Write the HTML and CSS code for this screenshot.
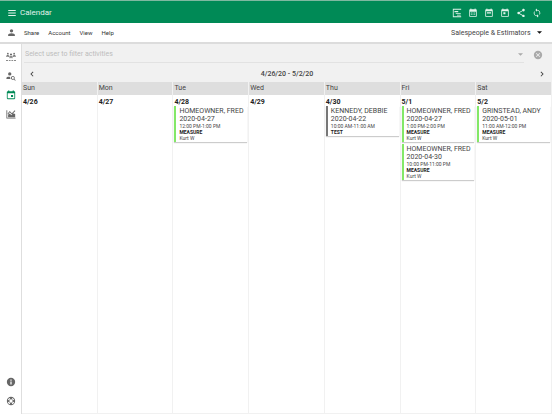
FILE: index.html
```html
<!DOCTYPE html>
<html lang="en">
<head>
<meta charset="utf-8">
<title>Calendar</title>
<link rel="stylesheet" href="styles.css">
</head>
<body>
<header class="topbar">
  <button class="icon-btn" aria-label="Menu"><svg viewBox="0 0 24 24"><path d="M3 5h18v2H3zM3 11h18v2H3zM3 17h18v2H3z"/></svg></button>
  <h1>Calendar</h1>
  <div class="actions">
    <button class="icon-btn" aria-label="Timeline"><svg viewBox="0 0 24 24"><path d="M2 2h2v18h18v2H2zM4 2h18v2H4zM6 7h9v3H6zM9 12h12v2H9zM12 16h9v2h-9z"/></svg></button>
    <button class="icon-btn" aria-label="Month"><svg viewBox="0 0 24 24"><path d="M19 3h-1V1h-2v2H8V1H6v2H5a2 2 0 0 0-2 2v14a2 2 0 0 0 2 2h14a2 2 0 0 0 2-2V5a2 2 0 0 0-2-2m0 16H5V9h14zM7 11h2v2H7zM11 11h2v2h-2zM15 11h2v2h-2zM7 15h2v2H7zM11 15h2v2h-2zM15 15h2v2h-2z"/></svg></button>
    <button class="icon-btn" aria-label="Week"><svg viewBox="0 0 24 24"><path d="M19 3h-1V1h-2v2H8V1H6v2H5a2 2 0 0 0-2 2v14a2 2 0 0 0 2 2h14a2 2 0 0 0 2-2V5a2 2 0 0 0-2-2m0 16H5V8h14zM7 10h10v3H7z"/></svg></button>
    <button class="icon-btn" aria-label="Day"><svg viewBox="0 0 24 24"><path d="M19 3h-1V1h-2v2H8V1H6v2H5a2 2 0 0 0-2 2v14a2 2 0 0 0 2 2h14a2 2 0 0 0 2-2V5a2 2 0 0 0-2-2m0 16H5V8h14zM8 10h5v5H8z"/></svg></button>
    <button class="icon-btn" aria-label="Share"><svg viewBox="0 0 24 24"><path d="M18 16.100c-.8 0-1.400.3-2 .8l-7.100-4.200a3.300 3.300 0 0 0 0-1.400L16 7.200A3 3 0 1 0 15 5c0 .2 0 .5.100.7L8 9.800a3 3 0 1 0 0 4.400l7.100 4.200-.1.600a2.900 2.900 0 1 0 3-2.900"/></svg></button>
    <button class="icon-btn" aria-label="Refresh"><svg viewBox="0 0 24 24"><path d="M12 18a6 6 0 0 1-6-6c0-1 .25-1.970.7-2.800L5.240 7.740A8 8 0 0 0 12 20v3l4-4-4-4m0-11V1L8 5l4 4V6a6 6 0 0 1 6 6c0 1-.25 1.970-.7 2.800l1.460 1.460A8 8 0 0 0 12 4"/></svg></button>
  </div>
</header>
<nav class="menubar">
  <svg class="user" viewBox="0 0 24 24"><path d="M12 3a4.500 4.500 0 1 1 0 9 4.500 4.500 0 0 1 0-9m0 11c5 0 9 2 9 4.500V21H3v-2.500C3 16 7 14 12 14"/></svg>
  <a href="#">Share</a><a href="#">Account</a><a href="#">View</a><a href="#">Help</a>
  <div class="group">
    <select aria-label="Group"><option>Salespeople &amp; Estimators</option></select>
    <svg class="caret" viewBox="0 0 10 5"><path d="M0 0h10L5 5z"/></svg>
  </div>
</nav>
<div class="shell">
  <aside class="sidebar">
    <button class="icon-btn" aria-label="Teams"><svg viewBox="0 0 24 24"><circle cx="12" cy="6" r="2.500"/><circle cx="4.500" cy="4" r="2"/><circle cx="19.500" cy="4" r="2"/><path d="M8.500 15v-3.500l3.500-2 3.500 2V15h-2v-2h-3v2zM1 12V8.500L4.500 7 8 9v3H6v-1H3v1zM16 12V9l3.500-2L23 8.500V12h-2v-1h-3v1zM0 19h5v2H0zM7 19h4v2H7zM13 19h4v2h-4zM19 19h5v2h-5z"/></svg></button>
    <button class="icon-btn" aria-label="Find customer"><svg viewBox="0 0 24 24"><path d="M9 3a4 4 0 1 1 0 8 4 4 0 0 1 0-8m1 11.100A6 6 0 0 0 11 19H1v-2c0-2.700 5-4 9-2.900M16.500 12a4.500 4.500 0 0 1 3.800 6.900l3 3-1.400 1.400-3-3.100A4.500 4.500 0 1 1 16.500 12m0 2a2.500 2.500 0 1 0 0 5 2.500 2.500 0 0 0 0-5"/></svg></button>
    <button class="icon-btn active" aria-label="Calendar"><svg viewBox="0 0 24 24"><path d="M20 3h-1V1h-3v2H8V1H5v2H4a2 2 0 0 0-2 2v15a2 2 0 0 0 2 2h16a2 2 0 0 0 2-2V5a2 2 0 0 0-2-2m0 17H4V8h16zM12 12h5v5h-5z"/></svg></button>
    <button class="icon-btn" aria-label="Reports"><svg viewBox="0 0 24 24"><path d="M1 3h2v18h20v2H1zM5 20v-6l4-3 4 4 4-5 5 2v8zM4 11l5-6 5 5 7-7 1.500 1.500L14 13 9 8l-4 5z"/></svg></button>
    <button class="icon-btn push" aria-label="Information"><svg viewBox="0 0 24 24"><path fill-rule="evenodd" d="M12 2a10 10 0 1 1 0 20 10 10 0 0 1 0-20m-1.500 4v3h3V6zm0 5v7h3v-7z"/></svg></button>
    <button class="icon-btn" aria-label="Support"><svg viewBox="0 0 24 24"><path fill-rule="evenodd" d="M12 2a10 10 0 1 1 0 20 10 10 0 0 1 0-20m0 6a4 4 0 1 0 0 8 4 4 0 0 0 0-8M9 4.500A8 8 0 0 0 4.500 9l2.500 1a6 6 0 0 1 3-3zm6 0-1 2.500a6 6 0 0 1 3 3l2.500-1A8 8 0 0 0 15 4.500M4.500 15A8 8 0 0 0 9 19.500l1-2.500a6 6 0 0 1-3-3zm15 0-2.500-1a6 6 0 0 1-3 3l1 2.500a8 8 0 0 0 4.500-4.500"/></svg></button>
  </aside>
  <main>
    <div class="filter">
      <label class="field">
        <input type="text" aria-label="User filter" placeholder="Select user to filter activities">
        <svg class="caret" viewBox="0 0 10 5"><path d="M0 0h10L5 5z"/></svg>
      </label>
      <button class="icon-btn clear" aria-label="Clear"><svg viewBox="0 0 24 24"><path fill-rule="evenodd" d="M12 2a10 10 0 1 1 0 20 10 10 0 0 1 0-20M8.400 7 7 8.400l3.600 3.600L7 15.600 8.400 17l3.600-3.600 3.600 3.600 1.400-1.400-3.600-3.600L17 8.400 15.600 7 12 10.600z"/></svg></button>
    </div>
    <div class="range">
      <button class="icon-btn" aria-label="Previous week"><svg viewBox="0 0 24 24"><path d="M15.500 7.500 11 12l4.500 4.500L14 18l-6-6 6-6z"/></svg></button>
      <h2>4/26/20 - 5/2/20</h2>
      <button class="icon-btn" aria-label="Next week"><svg viewBox="0 0 24 24"><path d="M8.500 16.500 13 12 8.500 7.500 10 6l6 6-6 6z"/></svg></button>
    </div>
    <div class="week">
      <section class="day"><h3>Sun</h3><div class="slot"><b class="date">4/26</b></div></section>
      <section class="day"><h3>Mon</h3><div class="slot"><b class="date">4/27</b></div></section>
      <section class="day"><h3>Tue</h3><div class="slot"><b class="date">4/28</b>
        <article class="card"><p>HOMEOWNER, FRED</p><p>2020-04-27</p><small>12:00 PM-1:00 PM</small><strong>MEASURE</strong><small>Kurt W</small></article></div></section>
      <section class="day"><h3>Wed</h3><div class="slot"><b class="date">4/29</b></div></section>
      <section class="day"><h3>Thu</h3><div class="slot"><b class="date">4/30</b>
        <article class="card test"><p>KENNEDY, DEBBIE</p><p>2020-04-22</p><small>10:00 AM-11:00 AM</small><strong>TEST</strong></article></div></section>
      <section class="day"><h3>Fri</h3><div class="slot"><b class="date">5/1</b>
        <article class="card"><p>HOMEOWNER, FRED</p><p>2020-04-27</p><small>1:00 PM-2:00 PM</small><strong>MEASURE</strong><small>Kurt W</small></article>
        <article class="card"><p>HOMEOWNER, FRED</p><p>2020-04-30</p><small>10:00 PM-11:00 PM</small><strong>MEASURE</strong><small>Kurt W</small></article></div></section>
      <section class="day"><h3>Sat</h3><div class="slot"><b class="date">5/2</b>
        <article class="card"><p>GRINSTEAD, ANDY</p><p>2020-05-01</p><small>11:00 AM-12:00 PM</small><strong>MEASURE</strong><small>Kurt W</small></article></div></section>
    </div>
  </main>
</div>
</body>
</html>
```
FILE: styles.css
```css
* { box-sizing: border-box; margin: 0; padding: 0; }
body {
  display: flex;
  flex-direction: column;
  min-height: 100vh;
  background: #fff;
  color: #444;
  font: 6px/8px Roboto, sans-serif;
}
button, input, select { border: 0; background: none; font: inherit; color: inherit; outline: 0; }
svg { display: block; fill: currentColor; }
.icon-btn { width: 10px; height: 10px; flex: none; }
.icon-btn svg { width: 10px; height: 10px; }

.topbar {
  display: flex;
  align-items: center;
  gap: 3px;
  height: 23px;
  padding: 1px 10px 0 7px;
  border-top: 1px solid #7fb8a0;
  background: #008a56;
  color: #e4f4ec;
}
.topbar h1 { font-size: 8px; line-height: 10px; font-weight: 400; }
.actions { display: flex; gap: 6px; margin-left: auto; }

.menubar {
  display: flex;
  align-items: center;
  gap: 9px;
  height: 19px;
  padding: 0 10px 0 7px;
}
.menubar a { color: #333; text-decoration: none; }
.menubar .user { width: 9px; height: 9px; margin-right: -1px; color: #666; }
.group { display: flex; align-items: center; gap: 6px; margin-left: auto; }
.group select { appearance: none; height: 10px; font-size: 7px; }
.caret { width: 5px; height: 3px; }
.group .caret { color: #111; }

.shell { display: flex; flex: 1; border-top: 2px solid #dcdcdc; }
.sidebar {
  display: flex;
  flex-direction: column;
  align-items: center;
  gap: 9px;
  width: 22px;
  padding: 8px 0 8px;
  border-right: 1px solid #dedede;
  color: #666;
}
.sidebar .active { color: #008a56; }
.sidebar .push { margin-top: auto; }

main { display: flex; flex: 1; flex-direction: column; background: #f1f1f1; padding-bottom: 1px; }
.filter { display: flex; align-items: center; gap: 9px; height: 21px; padding: 0 9px 0 2px; }
.field {
  display: flex;
  flex: 1;
  align-items: center;
  height: 17px;
  padding: 0 1px;
  border-bottom: 1px solid #e2e2e2;
  color: #aaa;
}
.field input { flex: 1; min-width: 0; height: 12px; font-size: 7px; }
.field input::placeholder { color: #bcbcbc; }
.clear { color: #aaa; }
.range { display: flex; align-items: center; justify-content: space-between; height: 17px; padding: 0 5px; }
.range h2 { font-size: 7px; font-weight: 500; }

.week { display: grid; flex: 1; grid-template-columns: repeat(7, 1fr); }
.day { display: flex; flex-direction: column; min-width: 0; border-right: 1px solid #f1f1f1; }
.day h3 { height: 13px; padding-left: 1px; background: #dedede; font-size: 7px; line-height: 12px; font-weight: 400; }
.slot { flex: 1; padding: 3px 1px 0 1px; background: #fff; }
.date { display: block; color: #222; font-size: 7px; font-weight: 700; }
.card {
  margin-bottom: 2px;
  padding: 1px 0 1px 3px;
  border-left: 2px solid #83e867;
  box-shadow: 0 1px 1px #ccc;
  background: #fff;
  white-space: nowrap;
}
.card.test { border-color: #777; }
.card p { font-size: 7px; line-height: 8px; }
.card small, .card strong { display: block; font-size: 5px; line-height: 6px; }
.card strong { color: #222; font-weight: 700; }
```
